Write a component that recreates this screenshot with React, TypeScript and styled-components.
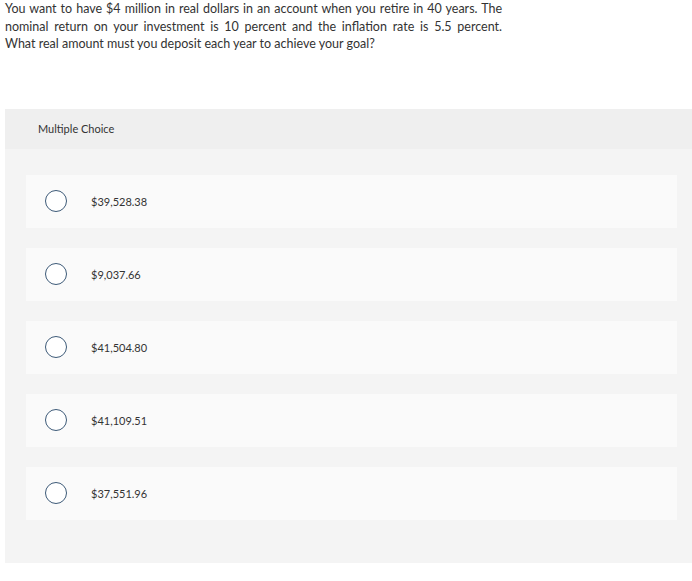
import React from 'react';
import styled, { createGlobalStyle } from 'styled-components';

const choices = ['$39,528.38', '$9,037.66', '$41,504.80', '$41,109.51', '$37,551.96'];

const questionLines = [
  'You want to have $4 million in real dollars in an account when you retire in 40 years. The',
  'nominal return on your investment is 10 percent and the inflation rate is 5.5 percent.',
  'What real amount must you deposit each year to achieve your goal?',
];

export default function App() {
  return (
    <>
      <GlobalStyle />
      <Page>
        <Question>
          {questionLines.map((line, i) => (
            <QuestionLine key={i} $justify={i < questionLines.length - 1}>
              {line}
            </QuestionLine>
          ))}
        </Question>
        <Panel>
          <PanelHeader>Multiple Choice</PanelHeader>
          <ChoiceList>
            {choices.map((c) => (
              <ChoiceCard key={c}>
                <Radio />
                <ChoiceLabel>{c}</ChoiceLabel>
              </ChoiceCard>
            ))}
          </ChoiceList>
        </Panel>
      </Page>
    </>
  );
}

const GlobalStyle = createGlobalStyle`
  body {
    margin: 0;
    background: #fff;
    font-family: Lato, "Liberation Sans", sans-serif;
    color: #333;
  }
`;

const Page = styled.div`
  width: 692px;
`;

const Question = styled.div`
  margin-left: 5px;
  width: 497px;
  font-size: 12.5px;
  line-height: 17.5px;
  color: #333;
`;

const QuestionLine = styled.div<{ $justify: boolean }>`
  white-space: nowrap;
  text-align: ${({ $justify }) => ($justify ? 'justify' : 'left')};
  text-align-last: ${({ $justify }) => ($justify ? 'justify' : 'left')};
`;

const Panel = styled.div`
  margin: 56px 0 0 5px;
  background: #f4f4f4;
  padding-bottom: 43px;
`;

const PanelHeader = styled.div`
  height: 40px;
  display: flex;
  align-items: center;
  padding-left: 33px;
  background: #efefef;
  font-size: 11px;
  color: #333;
`;

const ChoiceList = styled.div`
  display: flex;
  flex-direction: column;
  gap: 20px;
  padding: 26px 15px 0 21px;
`;

const ChoiceCard = styled.div`
  height: 53px;
  display: flex;
  align-items: center;
  padding-left: 19px;
  background: #fafafa;
`;

const Radio = styled.span`
  width: 20px;
  height: 20px;
  border: 1.5px solid #3d5a78;
  border-radius: 50%;
  background: #fff;
  flex-shrink: 0;
`;

const ChoiceLabel = styled.span`
  margin-left: 24px;
  font-size: 11px;
  color: #333;
`;
